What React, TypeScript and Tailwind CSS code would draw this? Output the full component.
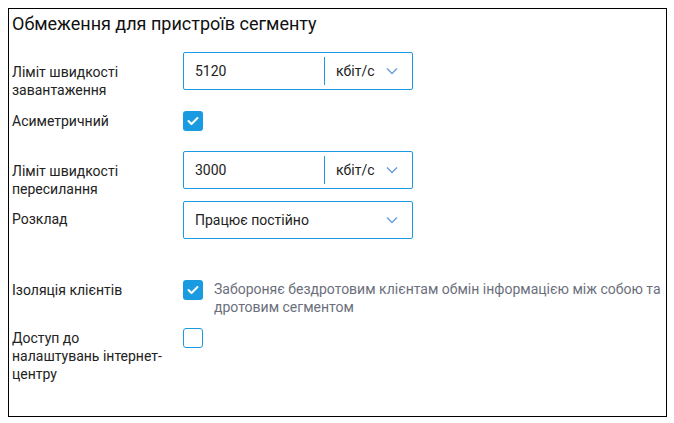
import React from "react";

const Chevron = () => (
  <svg width="12" height="8" viewBox="0 0 12 8" fill="none" className="shrink-0">
    <path d="M1 1.5 L6 6.5 L11 1.5" stroke="#6a9fdc" strokeWidth="1.4" />
  </svg>
);

const Check = ({ checked }: { checked: boolean }) =>
  checked ? (
    <div className="w-[20px] h-[20px] rounded-[3px] bg-[#1a9ae0] flex items-center justify-center shrink-0">
      <svg width="12" height="10" viewBox="0 0 12 10" fill="none">
        <path d="M1.5 5 L4.5 8 L10.5 2" stroke="white" strokeWidth="2" strokeLinecap="round" strokeLinejoin="round" />
      </svg>
    </div>
  ) : (
    <div className="w-[20px] h-[20px] rounded-[3px] border border-[#1a9ae0] bg-white shrink-0" />
  );

const SpeedInput = ({ value }: { value: string }) => (
  <div className="w-[230px] h-[38px] border border-[#1a9ae0] rounded-[2px] flex items-center shrink-0">
    <div className="w-[140px] pl-[11px] text-[14px] text-[#222]">{value}</div>
    <div className="w-px h-[28px] bg-[#1a9ae0]" />
    <div className="flex-1 flex items-center pl-[11px] pr-[14px] justify-between text-[14px] text-[#222]">
      <span>кбіт/с</span>
      <Chevron />
    </div>
  </div>
);

export default function App() {
  return (
    <div className="p-[8px] bg-white" style={{ fontFamily: "Roboto, 'Liberation Sans', sans-serif" }}>
      <div className="w-[659px] h-[409px] border border-black pl-[3px] pr-[5px] text-[14px] leading-[18px] text-[#222]">
        <div className="text-[18px] leading-[22px] mt-[4px] text-[#111]">Обмеження для пристроїв сегменту</div>

        <div className="flex mt-[17px]">
          <div className="w-[171px] shrink-0 pt-[11px]">Ліміт швидкості<br />завантаження</div>
          <SpeedInput value="5120" />
        </div>

        <div className="flex items-center mt-[12px]">
          <div className="w-[171px] shrink-0">Асиметричний</div>
          <Check checked />
        </div>

        <div className="flex mt-[20px]">
          <div className="w-[171px] shrink-0 pt-[11px]">Ліміт швидкості<br />пересилання</div>
          <SpeedInput value="3000" />
        </div>

        <div className="flex mt-[3px]">
          <div className="w-[171px] shrink-0 pt-[9px]">Розклад</div>
          <div className="w-[230px] h-[38px] border border-[#1a9ae0] rounded-[2px] flex items-center justify-between pl-[11px] pr-[14px]">
            <span>Працює постійно</span>
            <Chevron />
          </div>
        </div>

        <div className="flex mt-[41px]">
          <div className="w-[171px] shrink-0 pt-px">Ізоляція клієнтів</div>
          <Check checked />
          <div className="ml-[11px] text-[#6b6f7c]">
            Забороняє бездротовим клієнтам обмін інформацією між собою та дротовим сегментом
          </div>
        </div>

        <div className="flex mt-[12px]">
          <div className="w-[171px] shrink-0 pt-px">
            Доступ до
            <br />
            налаштувань інтернет-
            <br />
            центру
          </div>
          <Check checked={false} />
        </div>
      </div>
    </div>
  );
}
